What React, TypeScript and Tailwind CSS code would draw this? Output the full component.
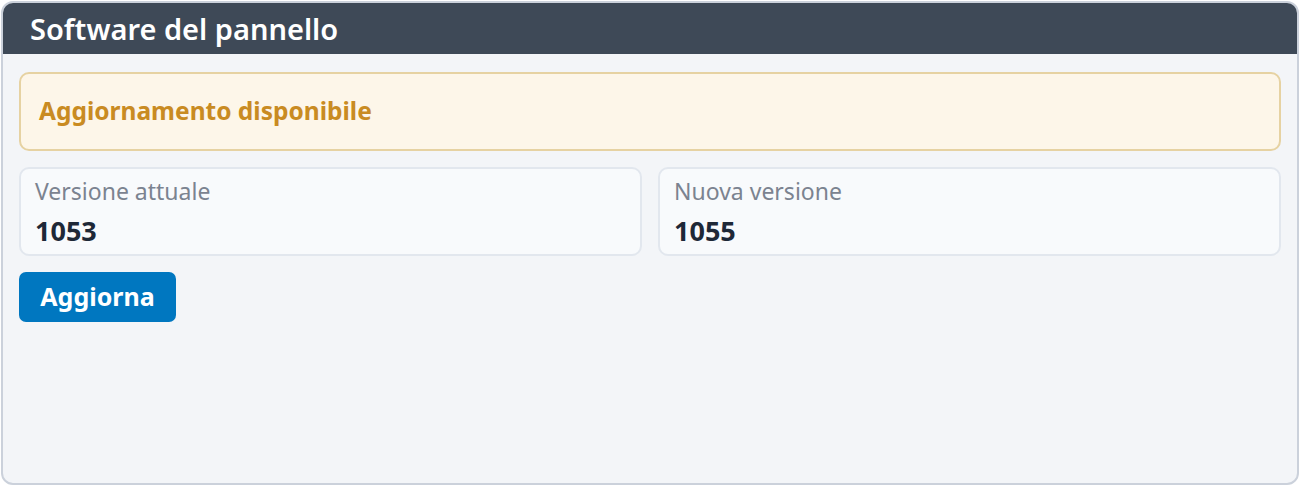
import { useState } from 'react';

const font = { fontFamily: '"Noto Sans", "Liberation Sans", sans-serif' };

function VersionCard({ label, value }: { label: string; value: string }) {
  return (
    <div className="h-[89px] rounded-[10px] border-2 border-[#e2e7ee] bg-[#f8fafc] px-[14px] pt-[6px]">
      <div className="text-[23px] leading-[32px] text-[#7b8390]">{label}</div>
      <div className="mt-[8px] text-[27px] font-bold leading-[32px] text-[#1e2837]">{value}</div>
    </div>
  );
}

export default function App() {
  const [current] = useState('1053');
  const [next] = useState('1055');

  return (
    <div className="h-[486px] w-[1300px] bg-white p-px" style={font}>
      <div className="flex h-[484px] flex-col overflow-hidden rounded-[12px] border-2 border-[#cbd1db] bg-[#f3f5f8]">
        <div className="flex h-[51px] shrink-0 items-center bg-[#3e4957] px-[27px]">
          <h1 className="text-[29px] font-semibold leading-none text-white">Software del pannello</h1>
        </div>

        <div className="flex flex-col gap-4 px-4 pt-[18px]">
          <div className="flex h-[79px] items-center rounded-[10px] border-2 border-[#e6d2a2] bg-[#fdf6e9] px-[18px]">
            <span className="text-[24.5px] font-bold text-[#c98b22]">Aggiornamento disponibile</span>
          </div>

          <div className="grid grid-cols-2 gap-4">
            <VersionCard label="Versione attuale" value={current} />
            <VersionCard label="Nuova versione" value={next} />
          </div>

          <div>
            <button className="h-[50px] w-[157px] rounded-[7px] bg-[#0077c0] text-[25px] font-bold text-white">
              Aggiorna
            </button>
          </div>
        </div>
      </div>
    </div>
  );
}
